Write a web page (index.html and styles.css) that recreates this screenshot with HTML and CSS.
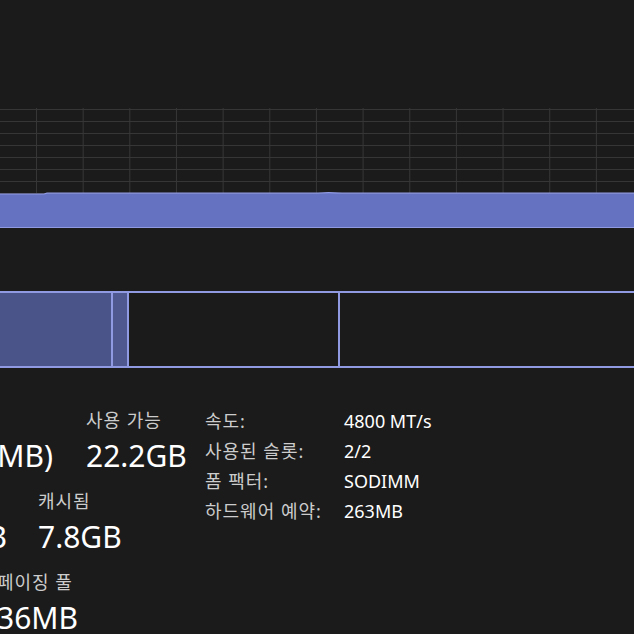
FILE: index.html
```html
<!DOCTYPE html>
<html lang="ko">

<head>
    <meta charset="UTF-8">
    <meta name="viewport" content="width=device-width, initial-scale=1.0">
    <title>메모리</title>
    <link rel="stylesheet" href="styles.css">
</head>

<body>
    <main class="memory">
        <!-- memory usage graph -->
        <div class="graph">
            <svg class="graph-fill" viewBox="0 0 634 120" preserveAspectRatio="none">
                <path d="M0 86 L44 86 L47 85.2 L318 85.2 Q326 84.4 334 84.8 L342 85.2 L634 85.2 L634 120 L0 120 Z" fill="#6572c2" />
                <path d="M0 86 L44 86 L47 85.2 L318 85.2 Q326 84.4 334 84.8 L342 85.2 L634 85.2" fill="none" stroke="#8f9ae2" stroke-width="1.2" />
                <line x1="0" y1="119.5" x2="634" y2="119.5" stroke="#8f9ae2" stroke-width="1" />
            </svg>
        </div>

        <!-- memory composition -->
        <div class="composition">
            <div class="seg in-use"></div>
            <div class="seg modified"></div>
            <div class="seg standby"></div>
            <div class="seg free"></div>
        </div>

        <div class="details">
            <div class="stats">
                <div class="stat-row row-1">
                    <div class="stat lead">
                        <span class="label">사용 중(압축)</span>
                        <span class="value">15.5GB (263MB)</span>
                    </div>
                    <div class="stat">
                        <span class="label">사용 가능</span>
                        <span class="value">22.2GB</span>
                    </div>
                </div>
                <div class="stat-row row-2">
                    <div class="stat lead">
                        <span class="label">커밋됨</span>
                        <span class="value">17.4/41.7GB</span>
                    </div>
                    <div class="stat">
                        <span class="label">캐시됨</span>
                        <span class="value">7.8GB</span>
                    </div>
                </div>
                <div class="stat-row row-3">
                    <div class="stat paged">
                        <span class="label">페이징 풀</span>
                        <span class="value">36MB</span>
                    </div>
                </div>
            </div>

            <dl class="specs">
                <div class="spec"><dt>속도:</dt><dd>4800 MT/s</dd></div>
                <div class="spec"><dt>사용된 슬롯:</dt><dd>2/2</dd></div>
                <div class="spec"><dt>폼 팩터:</dt><dd>SODIMM</dd></div>
                <div class="spec"><dt>하드웨어 예약:</dt><dd>263MB</dd></div>
            </dl>
        </div>
    </main>
</body>

</html>
```

FILE: styles.css
```css
:root {
    --bg: #1b1b1b;
    --grid: #363636;
    --accent: #6572c2;
    --accent-line: #8f9ae2;
    --in-use: #4b5489;
    --label: #cccccc;
    --text: #ffffff;
}

html,
body {
    margin: 0;
    padding: 0;
    background-color: var(--bg);
    overflow: hidden;
}

body {
    font-family: "Noto Sans", "Noto Sans CJK KR", sans-serif;
    color: var(--text);
    width: 634px;
    height: 634px;
}

.memory {
    padding-top: 108px;
}

/* graph */
.graph {
    height: 120px;
    background-image:
        linear-gradient(to right, var(--grid) 1px, transparent 1px),
        linear-gradient(to bottom, var(--grid) 1px, transparent 1px);
    background-size: 46.67px 12px;
    background-position: 36px 1px;
}

.graph-fill {
    display: block;
    width: 100%;
    height: 100%;
}

/* composition bar */
.composition {
    display: flex;
    height: 73px;
    margin: 63px -20px 0;
    border: 2px solid var(--accent-line);
}

.seg {
    height: 100%;
}

.seg+.seg {
    border-left: 2px solid var(--accent-line);
}

.in-use {
    width: 129px;
    background-color: var(--in-use);
}

.modified {
    width: 14px;
    background-color: #4f5990;
}

.standby {
    width: 209px;
}

.free {
    flex: 1;
}

/* details */
.details {
    display: flex;
    margin-top: 40px;
}

.stats {
    width: 405px;
    margin-left: -200px;
    display: flex;
    flex-direction: column;
    gap: 15px;
}

.stat-row {
    display: flex;
}

.stat {
    display: flex;
    flex-direction: column;
    gap: 6px;
}

.label {
    font-size: 18px;
    line-height: 24px;
    letter-spacing: 1px;
    color: var(--label);
}

.value {
    font-size: 30px;
    line-height: 36px;
    white-space: nowrap;
}

.lead .value {
    text-align: right;
}

.row-1 .lead {
    width: 253px;
    margin-right: 33px;
}

.row-2 .lead {
    width: 207px;
    margin-right: 31px;
}

.paged {
    margin-left: 197px;
}

.specs {
    margin: -2px 0 0;
    font-size: 18px;
    line-height: 30px;
}

.spec {
    display: flex;
}

.spec dt {
    width: 139px;
    letter-spacing: 1px;
    color: var(--label);
}

.spec dd {
    margin: 0;
    color: var(--text);
}
```
